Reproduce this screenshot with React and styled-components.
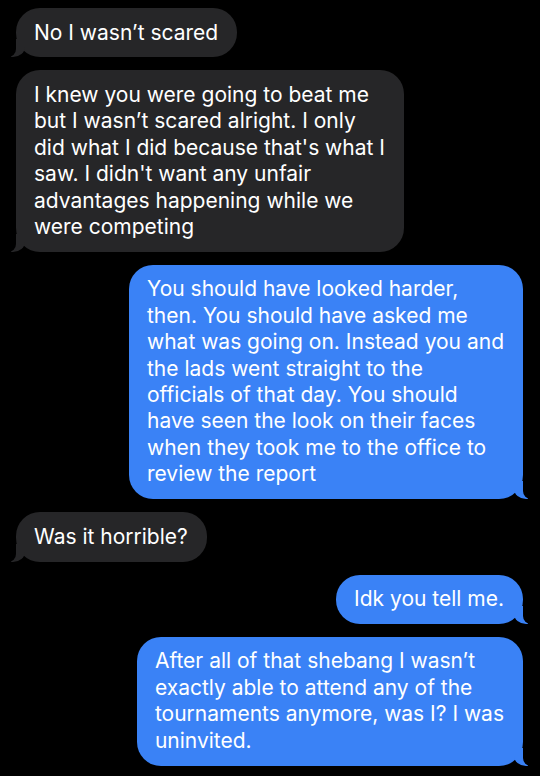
import React from "react"
import styled, { createGlobalStyle, css } from "styled-components"

const GlobalStyle = createGlobalStyle`
  html, body {
    margin: 0;
    padding: 0;
    background: #000;
  }
`

const Thread = styled.div`
  width: 540px;
  min-height: 776px;
  box-sizing: border-box;
  padding: 8px 17px 0 16px;
  background: #000;
  display: flex;
  flex-direction: column;
  gap: 13px;
  font-family: Inter, "Liberation Sans", sans-serif;
`

const Bubble = styled.div`
  position: relative;
  align-self: ${({ $mine }) => ($mine ? "flex-end" : "flex-start")};
  background: ${({ $mine }) => ($mine ? "#3a82f6" : "#262628")};
  color: #fff;
  font-size: 21px;
  line-height: 26.4px;
  padding: 11.5px 19px 11.5px 18px;
  border-radius: 24px;
  white-space: nowrap;

  &::before,
  &::after {
    content: "";
    position: absolute;
    bottom: 0;
    height: 18px;
  }

  ${({ $mine }) =>
    $mine
      ? css`
          &::before {
            right: -5px;
            width: 14px;
            background: #3a82f6;
            border-bottom-left-radius: 12px 10px;
          }
          &::after {
            right: -16px;
            width: 16px;
            background: #000;
            border-bottom-left-radius: 8px;
          }
        `
      : css`
          &::before {
            left: -5px;
            width: 14px;
            background: #262628;
            border-bottom-right-radius: 12px 10px;
          }
          &::after {
            left: -16px;
            width: 16px;
            background: #000;
            border-bottom-right-radius: 8px;
          }
        `}
`

const messages = [
  { mine: false, lines: ["No I wasn\u2019t scared"] },
  {
    mine: false,
    lines: [
      "I knew you were going to beat me",
      "but I wasn\u2019t scared alright. I only",
      "did what I did because that's what I",
      "saw. I didn't want any unfair",
      "advantages happening while we",
      "were competing",
    ],
  },
  {
    mine: true,
    lines: [
      "You should have looked harder,",
      "then. You should have asked me",
      "what was going on. Instead you and",
      "the lads went straight to the",
      "officials of that day. You should",
      "have seen the look on their faces",
      "when they took me to the office to",
      "review the report",
    ],
  },
  { mine: false, lines: ["Was it horrible?"] },
  { mine: true, lines: ["Idk you tell me."] },
  {
    mine: true,
    lines: [
      "After all of that shebang I wasn\u2019t",
      "exactly able to attend any of the",
      "tournaments anymore, was I? I was",
      "uninvited.",
    ],
  },
]

const App = () => (
  <>
    <GlobalStyle />
    <Thread>
      {messages.map((m, i) => (
        <Bubble key={i} $mine={m.mine}>
          {m.lines.map((line, j) => (
            <React.Fragment key={j}>
              {j > 0 && <br />}
              {line}
            </React.Fragment>
          ))}
        </Bubble>
      ))}
    </Thread>
  </>
)

export default App
